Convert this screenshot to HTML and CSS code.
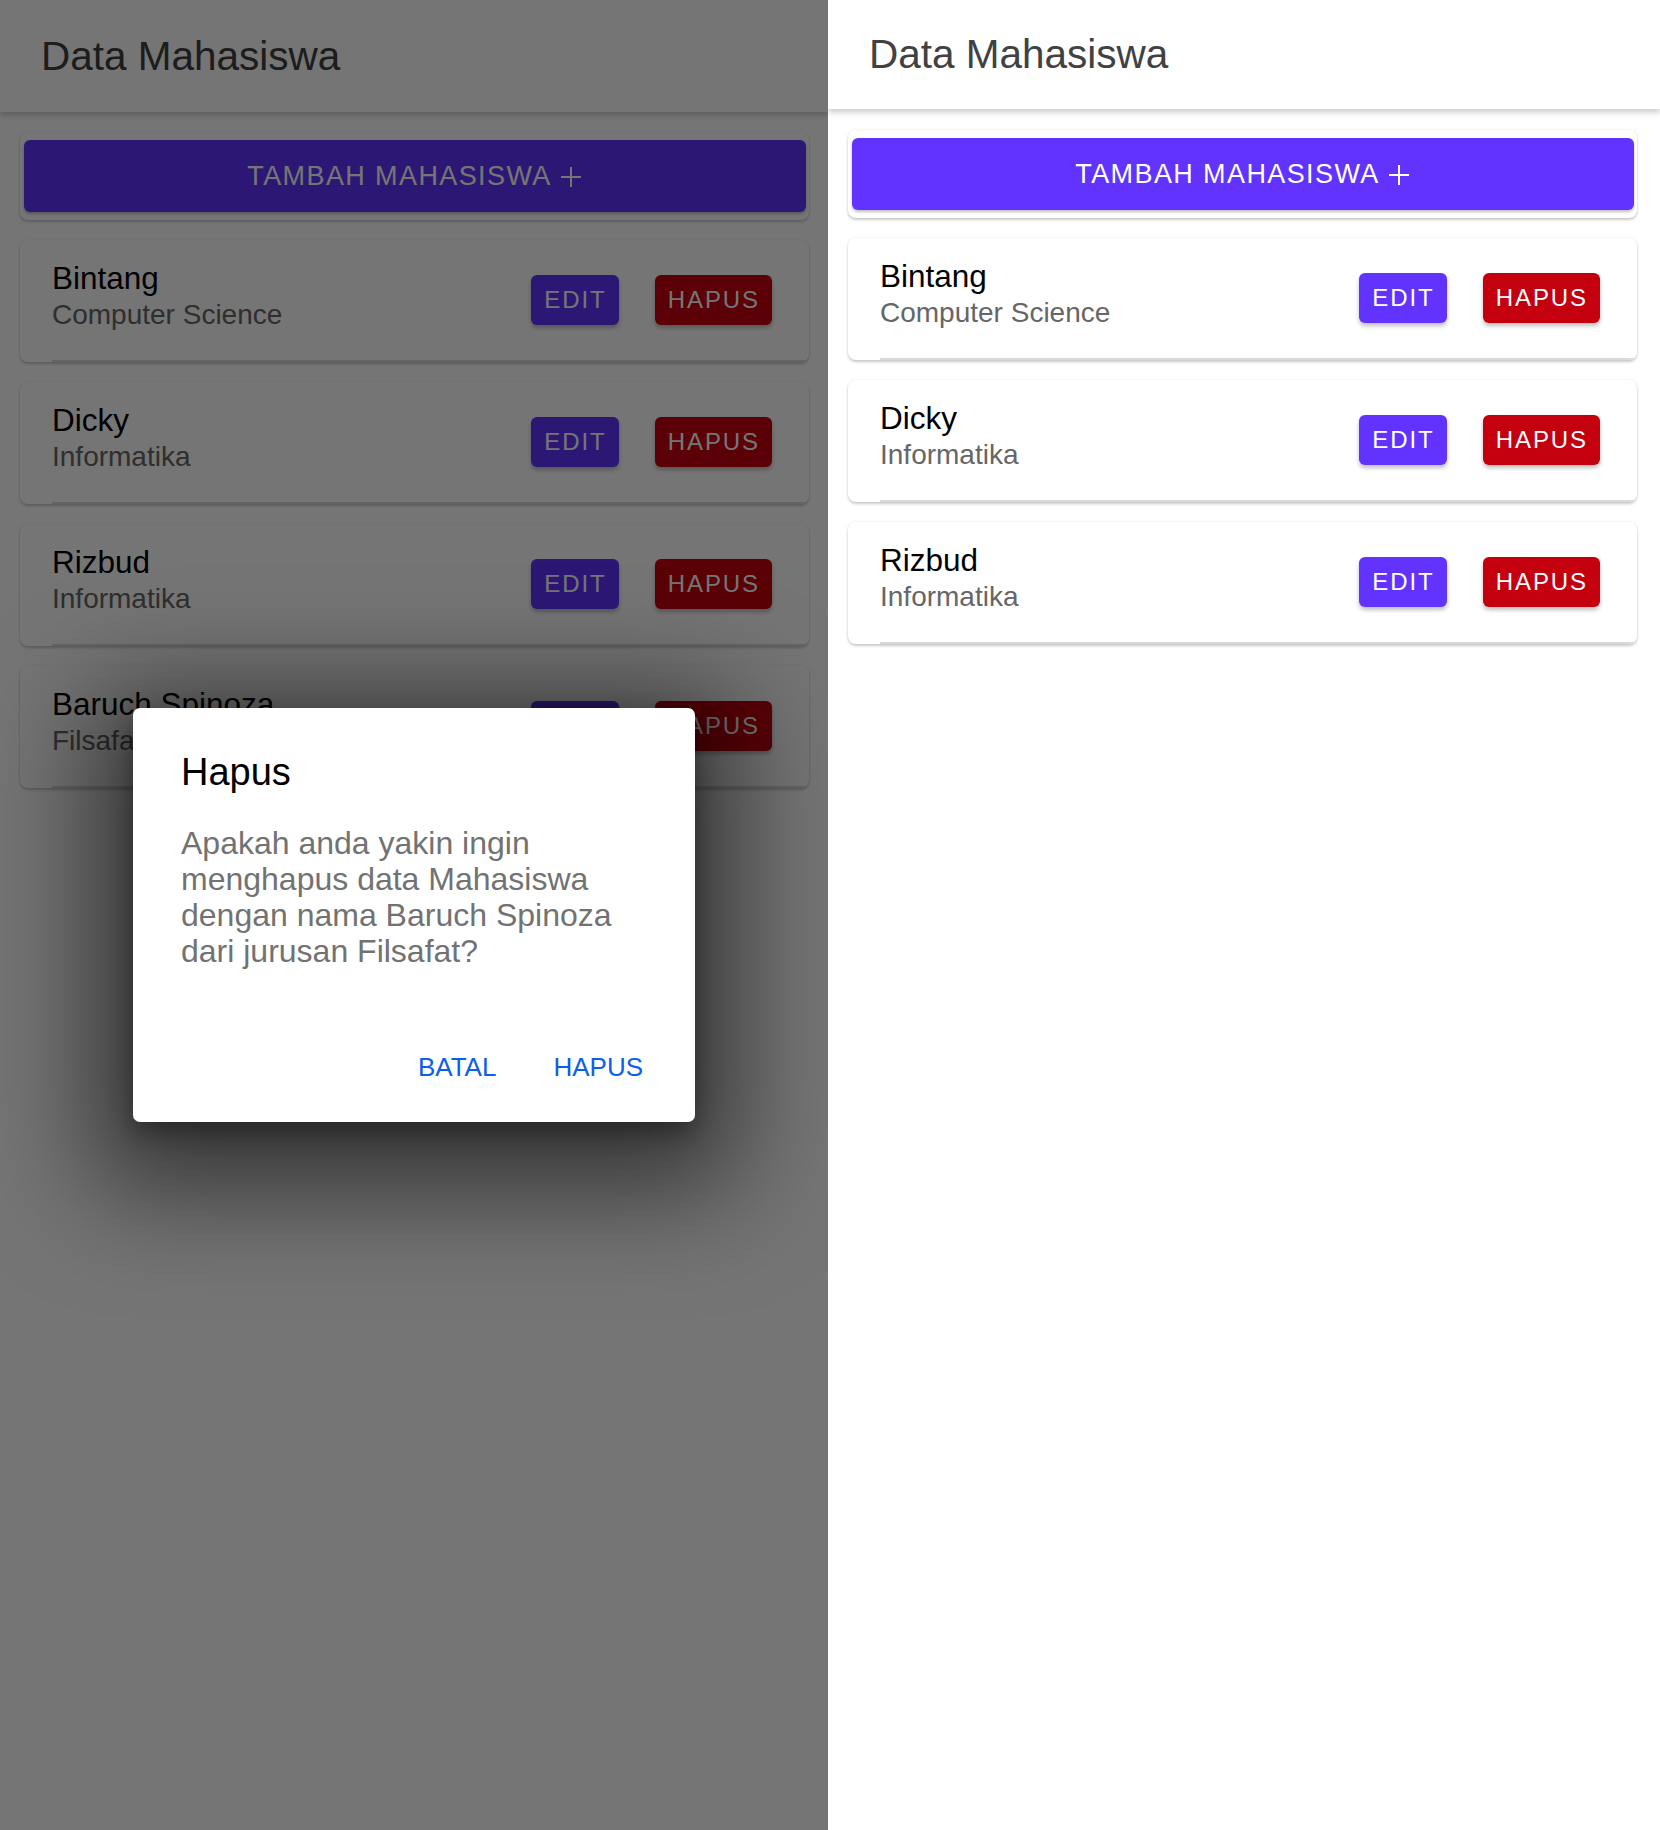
FILE: index.html
```html
<!DOCTYPE html>
<html lang="id">
<head>
<meta charset="utf-8">
<title>Data Mahasiswa</title>
<link rel="stylesheet" href="styles.css">
</head>
<body>
<div class="screen screen-left">
  <header class="appbar appbar-left"><h1 class="appbar-title">Data Mahasiswa</h1></header>
  <main class="content content-left">
    <div class="add-card">
      <button class="add-btn">TAMBAH MAHASISWA<svg class="plus" viewBox="0 0 24 24" width="24" height="24"><path d="M12 2v20M2 12h20" stroke="currentColor" stroke-width="2" fill="none"/></svg></button>
    </div>
    <div class="card"><div class="row">
      <div class="info"><div class="name">Bintang</div><div class="major">Computer Science</div></div>
      <div class="actions"><button class="btn btn-edit">EDIT</button><button class="btn btn-del">HAPUS</button></div>
    </div></div>
    <div class="card"><div class="row">
      <div class="info"><div class="name">Dicky</div><div class="major">Informatika</div></div>
      <div class="actions"><button class="btn btn-edit">EDIT</button><button class="btn btn-del">HAPUS</button></div>
    </div></div>
    <div class="card"><div class="row">
      <div class="info"><div class="name">Rizbud</div><div class="major">Informatika</div></div>
      <div class="actions"><button class="btn btn-edit">EDIT</button><button class="btn btn-del">HAPUS</button></div>
    </div></div>
    <div class="card"><div class="row">
      <div class="info"><div class="name">Baruch Spinoza</div><div class="major">Filsafat</div></div>
      <div class="actions"><button class="btn btn-edit">EDIT</button><button class="btn btn-del">HAPUS</button></div>
    </div></div>
  </main>
  <div class="scrim">
    <div class="dialog">
      <h2 class="dialog-title">Hapus</h2>
      <p class="dialog-text">Apakah anda yakin ingin menghapus data Mahasiswa dengan nama Baruch Spinoza dari jurusan Filsafat?</p>
      <div class="dialog-actions"><button class="text-btn">BATAL</button><button class="text-btn">HAPUS</button></div>
    </div>
  </div>
</div>
<div class="screen screen-right">
  <header class="appbar appbar-right"><h1 class="appbar-title">Data Mahasiswa</h1></header>
  <main class="content content-right">
    <div class="add-card">
      <button class="add-btn">TAMBAH MAHASISWA<svg class="plus" viewBox="0 0 24 24" width="24" height="24"><path d="M12 2v20M2 12h20" stroke="currentColor" stroke-width="2" fill="none"/></svg></button>
    </div>
    <div class="card"><div class="row">
      <div class="info"><div class="name">Bintang</div><div class="major">Computer Science</div></div>
      <div class="actions"><button class="btn btn-edit">EDIT</button><button class="btn btn-del">HAPUS</button></div>
    </div></div>
    <div class="card"><div class="row">
      <div class="info"><div class="name">Dicky</div><div class="major">Informatika</div></div>
      <div class="actions"><button class="btn btn-edit">EDIT</button><button class="btn btn-del">HAPUS</button></div>
    </div></div>
    <div class="card"><div class="row">
      <div class="info"><div class="name">Rizbud</div><div class="major">Informatika</div></div>
      <div class="actions"><button class="btn btn-edit">EDIT</button><button class="btn btn-del">HAPUS</button></div>
    </div></div>
  </main>
</div>
</body>
</html>
```
FILE: styles.css
```css
* { box-sizing: border-box; }
html, body { margin: 0; padding: 0; }
body {
  display: flex;
  width: 1660px;
  height: 1830px;
  overflow: hidden;
  background: #fff;
  font-family: "Liberation Sans", Arial, Helvetica, sans-serif;
}
button { font-family: inherit; border: 0; margin: 0; cursor: pointer; }

.screen {
  position: relative;
  height: 1830px;
  background: #fff;
  overflow: hidden;
  display: flex;
  flex-direction: column;
}
.screen-left { width: 828px; }
.screen-right { width: 832px; }

.appbar {
  position: relative;
  z-index: 1;
  background: #fff;
  display: flex;
  align-items: center;
  padding-left: 41px;
  box-shadow: 0 3px 6px rgba(0,0,0,0.22);
  flex: none;
}
.appbar-left { height: 112px; }
.appbar-right { height: 109px; }
.appbar-title {
  margin: 0;
  font-size: 40.5px;
  font-weight: 400;
  color: #414141;
  line-height: 1;
}

.content {
  display: flex;
  flex-direction: column;
  gap: 20px;
  padding-left: 20px;
}
.content-left { padding-top: 20px; padding-right: 19px; }
.content-right { padding-top: 21px; padding-right: 23px; }

.add-card {
  background: #fff;
  border-radius: 8px;
  padding: 8px 3px 8px 4px;
  box-shadow: 0 2px 3px rgba(0,0,0,0.2), 0 0 3px rgba(0,0,0,0.07);
}
.add-btn {
  width: 100%;
  height: 72px;
  background: #6233ff;
  color: #fff;
  border-radius: 6px;
  font-size: 27px;
  letter-spacing: 1.4px;
  display: flex;
  align-items: center;
  justify-content: center;
  gap: 7px;
  box-shadow: 0 2px 3px rgba(0,0,0,0.25);
}
.plus { width: 24px; height: 24px; margin-top: 1px; }

.card {
  background: #fff;
  border-radius: 8px;
  overflow: hidden;
  box-shadow: 0 2px 3px rgba(0,0,0,0.2), 0 0 3px rgba(0,0,0,0.07);
}
.row {
  height: 122px;
  margin-left: 32px;
  padding: 20px 37px 0 0;
  display: flex;
  justify-content: space-between;
  border-bottom: 2px solid #d9d9d9;
}
.info { display: flex; flex-direction: column; }
.name { font-size: 31.5px; line-height: 36px; color: #000; }
.major { font-size: 28px; line-height: 36px; color: #666; margin-top: 1px; }
.actions {
  display: flex;
  gap: 36px;
  margin-top: 15px;
}
.btn {
  height: 50px;
  padding: 0 12px 0 13px;
  border-radius: 6px;
  color: #fff;
  font-size: 24px;
  letter-spacing: 0.08em;
  box-shadow: 0 3px 4px rgba(0,0,0,0.25);
}
.btn-edit { background: #6233ff; }
.btn-del { background: #c4000f; }

.scrim {
  position: absolute;
  inset: 0;
  z-index: 5;
  background: rgba(0,0,0,0.54);
  display: flex;
  align-items: center;
  justify-content: center;
}
.dialog {
  width: 562px;
  background: #fff;
  border-radius: 7px;
  padding: 41px 52px 39px 48px;
  box-shadow: 0 28px 110px 40px rgba(0,0,0,0.55), 0 10px 24px rgba(0,0,0,0.35);
}
.dialog-title {
  margin: 0;
  font-size: 38px;
  line-height: 46px;
  font-weight: 400;
  color: #000;
}
.dialog-text {
  margin: 30px 0 0;
  font-size: 32px;
  line-height: 36px;
  color: #727272;
}
.dialog-actions {
  margin-top: 82px;
  display: flex;
  justify-content: flex-end;
  gap: 57px;
}
.text-btn {
  background: none;
  padding: 0;
  font-size: 26px;
  line-height: 32px;
  color: #0d5eeb;
}
```
